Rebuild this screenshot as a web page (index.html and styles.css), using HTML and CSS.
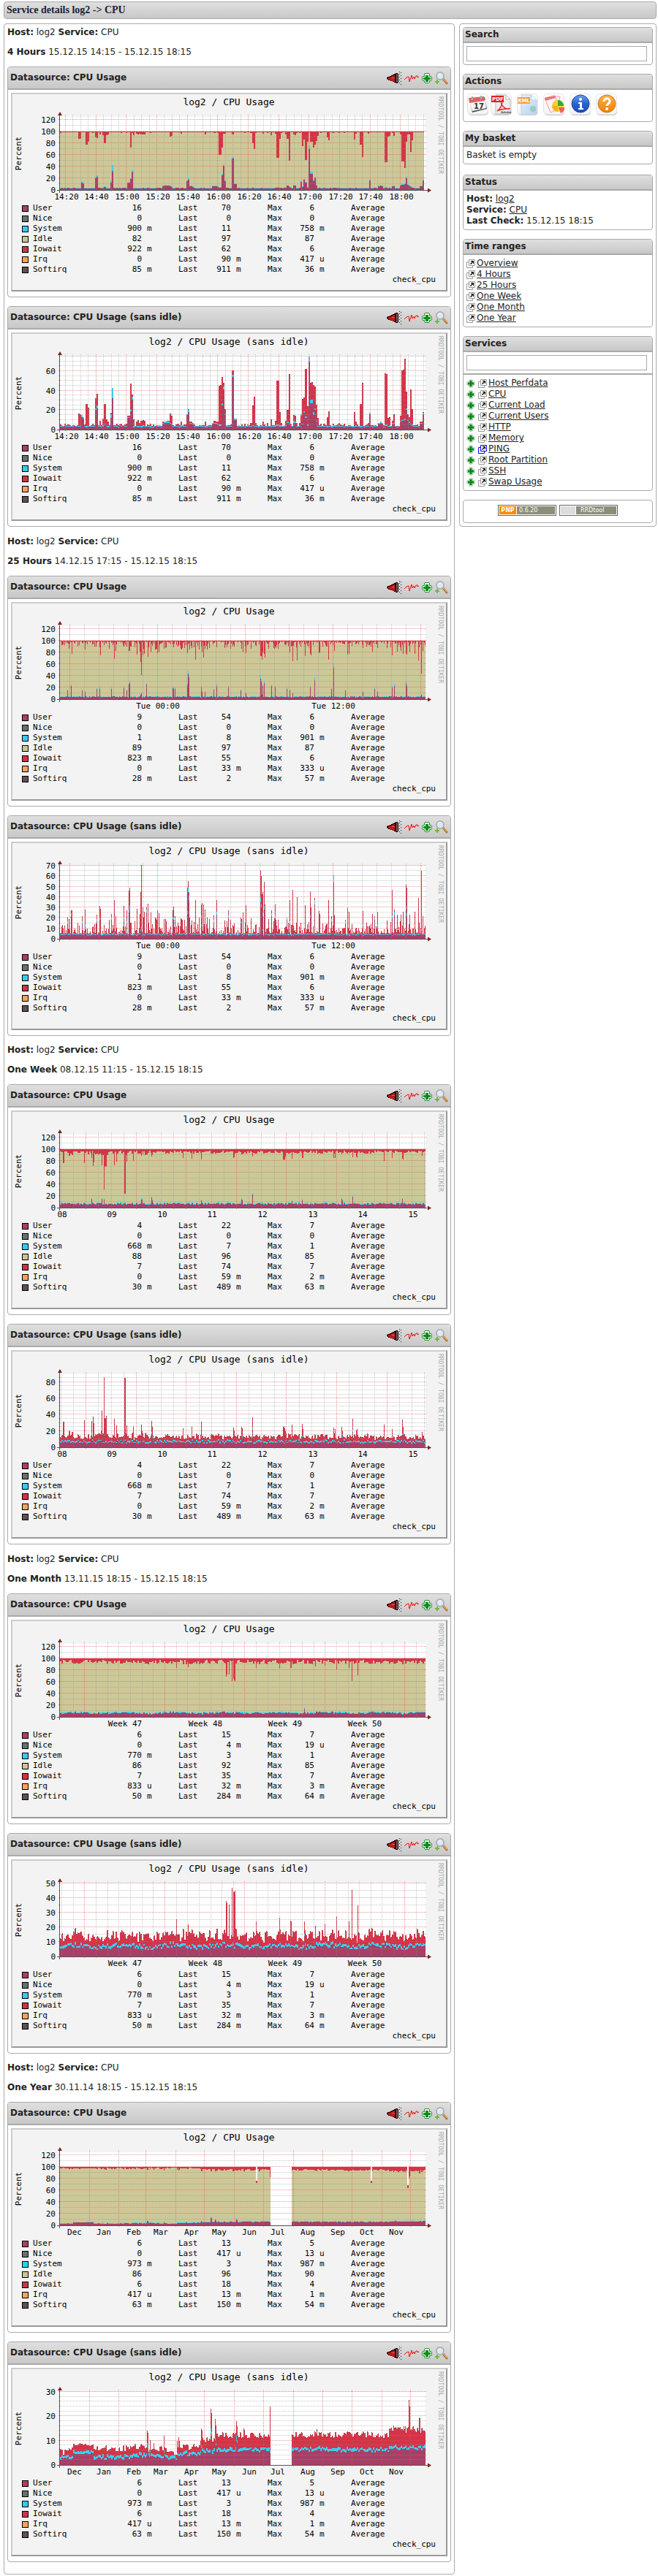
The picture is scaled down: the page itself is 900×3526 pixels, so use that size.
FILE: index.html
```html
<!DOCTYPE html>
<html lang="en">
<head>
<meta charset="utf-8">
<title>Service details log2 -&gt; CPU</title>
<link rel="stylesheet" href="styles.css">
</head>
<body>
<svg class="sprite" aria-hidden="true">
  <defs>
    <linearGradient id="g-tile" x1="0" y1="0" x2="0" y2="1"><stop offset="0" stop-color="#fff"/><stop offset="1" stop-color="#f4f4f4"/></linearGradient>
    <linearGradient id="g-blue" x1="0" y1="0" x2="0" y2="1"><stop offset="0" stop-color="#6c9cec"/><stop offset=".5" stop-color="#2c62cc"/><stop offset="1" stop-color="#1c4cb4"/></linearGradient>
    <linearGradient id="g-orange" x1="0" y1="0" x2="0" y2="1"><stop offset="0" stop-color="#ffb347"/><stop offset="1" stop-color="#f08000"/></linearGradient>
    <linearGradient id="g-page" x1="0" y1="0" x2="1" y2="1"><stop offset="0" stop-color="#e8f2fc"/><stop offset="1" stop-color="#b4d4f2"/></linearGradient>
  </defs>
  <symbol id="i-tile" viewBox="0 0 30 31">
    <rect x="1" y="1" width="28" height="29" rx="5" fill="#ccc"/>
    <rect x=".5" y=".5" width="28" height="28" rx="5" fill="url(#g-tile)" stroke="#e4e4e4"/>
  </symbol>
  <symbol id="i-alert" viewBox="0 0 20 18">
    <path d="M0 8h1V7h3V6h2V5h2V4h2V3h2V2h3v1h1v12h-1v1h-3v-1h-2v-1H8v-1H5v-1H2v-1H1v-1H0z" fill="#200"/>
    <path d="M2 8h3V7h2V6h2V5h2v9H9v-1H6v-1H4v-1H2z" fill="#c41818"/>
    <path d="M7 8h4v1H7z" fill="#f05050"/>
    <path d="M13 3h2v12h-2z" fill="#666"/>
    <path d="M17 0h1v1h-1zM19 1h1v1h-1zM17 3h1v1h-1zM19 5h1v1h-1zM17 7h1v1h-1zM19 9h1v1h-1zM17 11h1v1h-1zM19 13h1v1h-1zM17 15h1v1h-1zM19 17h1v1h-1z" fill="#222"/>
  </symbol>
  <symbol id="i-pulse" viewBox="0 0 20 12">
    <path d="M0 8l3-3 3-1 1 7 3-9 1 5 2-3 1 3 2-4h2v2l2-1" fill="none" stroke="#f01010"/>
  </symbol>
  <symbol id="i-plus" viewBox="0 0 14 14">
    <path d="M4 0h6v1h1v3h2v1h1v5h-1v1h-2v2h-1v1H4v-1H3v-2H1v-1H0V5h1V4h2V1h1z" fill="#2c8c3c"/>
    <path d="M4 1h6v4h3v5h-3v3H4v-3H1V5h3z" fill="#f0faf0"/>
    <path d="M5 3h4v3h3v3H9v3H5V9H2V6h3z" fill="#108c18"/>
  </symbol>
  <symbol id="i-plus-soft" viewBox="0 0 12 12">
    <path d="M3 1h1V0h4v1h1v2h2v1h1v4h-1v1H9v2H8v1H4v-1H3V9H1V8H0V4h1V3h2z" fill="#bcdcc0"/>
    <path d="M4 2h4v2h2v4H8v2H4V8H2V4h2z" fill="#58b064"/>
    <path d="M5 2h2v3h3v2H7v3H5V7H2V5h3z" fill="#0c8818"/>
  </symbol>
  <symbol id="i-zoom" viewBox="0 0 18 18">
    <path d="M11 10l5 6" stroke="#b87830" stroke-width="3" stroke-linecap="round"/>
    <path d="M11 10l5 5" stroke="#f0c080" stroke-width="1"/>
    <circle cx="7" cy="6" r="5" fill="#dceaf6" stroke="#b0b0b4" stroke-width="2"/>
    <path d="M4 5a3 3 0 0 1 4-2" stroke="#fff" fill="none"/>
    <path d="M2 11h2v2h2v2H4v2H2v-2H0v-2h2z" fill="#6cbc3c"/>
  </symbol>
  <symbol id="i-link" viewBox="0 0 12 12">
    <path d="M.5 3.500h8v8h-8z" fill="#fff" stroke="currentColor"/>
    <path d="M3.500.5h8v8h-8z" fill="#fff" stroke="currentColor"/>
    <path d="M6 2h4v4H9V4L6 7 5 6l3-3H6z" fill="#000"/>
  </symbol>
</svg>

<header class="bar"><h1 class="bar-title">Service details log2 -&gt; CPU</h1></header>

<div class="page">
  <main class="col main" id="periods"></main>

  <aside class="col side">
    <section class="box">
      <h2 class="box-head"><label for="q">Search</label></h2>
      <div class="box-body"><input class="field" id="q" type="text"></div>
    </section>

    <section class="box">
      <h2 class="box-head">Actions</h2>
      <div class="box-body actions">
        <button class="act" type="button" aria-label="Calendar"><svg class="act-icon" viewBox="0 0 30 31"><use href="#i-tile"/><path d="M3 8l21-3 3 16-20 5z" fill="#505050"/><path d="M3 11l22-2 1 11-19 4z" fill="#f4f4f4"/><path d="M2 6l21-2 1 6-21 3z" fill="#e06464"/><path d="M7 4v5M19 3v5" stroke="#aaa" stroke-width="2"/><text class="t-cal" x="9" y="21">17</text></svg></button>
        <a class="act" href="#pdf" aria-label="PDF"><svg class="act-icon" viewBox="0 0 30 31"><use href="#i-tile"/><path d="M7 2h14l6 6v20H7z" fill="#ececec" stroke="#bbb"/><path d="M21 2v6h6z" fill="#fff" stroke="#bbb"/><path d="M1 3h17v9H1z" fill="#e02020"/><path d="M9 24c5-3 8-12 6-11s4 9 10 8-12 0-16 3z" fill="none" stroke="#e02828" stroke-width="1.500"/><text class="t-pdf" x="2" y="10">PDF</text><text class="t-adobe" x="14" y="27">Adobe</text></svg></a>
        <a class="act" href="#xml" aria-label="XML"><svg class="act-icon" viewBox="0 0 30 31"><use href="#i-tile"/><path d="M6 2h14l7 7v19H6z" fill="url(#g-page)" stroke="#b8d0e8"/><path d="M20 2v7h7z" fill="#fff" stroke="#b8d0e8"/><path d="M1 5h17v9H1z" fill="#f8a040"/><circle cx="22" cy="21" r="4" fill="#94c8d8"/><path d="M20 19l3-1 1 3-2 3z" fill="#a4d49c"/><text class="t-pdf" x="1" y="12">XML</text></svg></a>
        <a class="act" href="#basket" aria-label="Basket"><svg class="act-icon" viewBox="0 0 30 31"><use href="#i-tile"/><path d="M11 3l12 1-2 17-12-2z" fill="#fce8e8" stroke="#f0a8a8"/><path d="M2 6l14-3 6 18-12 5z" fill="#fdf2f2" stroke="#eea0a0"/><path d="M2 6l14-3 1 3-14 4z" fill="#e87878"/><circle cx="20" cy="17" r="8" fill="#f8d030"/><path d="M20 17V9a8 8 0 0 1 8 8z" fill="#38a838"/><path d="M20 17h-8a8 8 0 0 0 8 8z" fill="#f4b020"/><path d="M21 19h8a8 8 0 0 1-5 8z" fill="#f06050"/></svg></a>
        <a class="act" href="#info" aria-label="Information"><svg class="act-icon" viewBox="0 0 30 31"><use href="#i-tile"/><circle cx="15" cy="14" r="12" fill="url(#g-blue)" stroke="#1848a8"/><circle cx="15" cy="8" r="2" fill="#fff"/><path d="M12 12h5v8h2v2h-7v-2h2v-6h-2z" fill="#fff"/></svg></a>
        <a class="act" href="#help" aria-label="Help"><svg class="act-icon" viewBox="0 0 30 31"><use href="#i-tile"/><circle cx="15" cy="14" r="12" fill="url(#g-orange)" stroke="#c87820"/><path d="M11 11c0-6 9-5 8 0 0 3-4 3-4 6" fill="none" stroke="#fff" stroke-width="3"/><circle cx="15" cy="21" r="2" fill="#fff"/></svg></a>
      </div>
    </section>

    <section class="box">
      <h2 class="box-head">My basket</h2>
      <div class="box-body">Basket is empty</div>
    </section>

    <section class="box box-status">
      <h2 class="box-head">Status</h2>
      <div class="box-body">
        <div><b>Host:</b> <a class="link" href="#log2">log2</a></div>
        <div><b>Service:</b> <a class="link" href="#cpu">CPU</a></div>
        <div><b>Last Check:</b> 15.12.15 18:15</div>
      </div>
    </section>

    <section class="box">
      <h2 class="box-head">Time ranges</h2>
      <ul class="box-body list" id="ranges"></ul>
    </section>

    <section class="box">
      <h2 class="box-head"><label for="svc">Services</label></h2>
      <div class="box-body box-filter"><input class="field" id="svc" type="text"></div>
      <ul class="box-body list" id="services"></ul>
    </section>

    <footer class="box badges">
      <a class="badge" href="#pnp"><span class="badge-tag">PNP</span><span class="badge-text">0.6.20</span></a>
      <a class="badge" href="#rrdtool"><span class="badge-tag badge-plain"></span><span class="badge-text badge-mid">RRDtool</span></a>
    </footer>
  </aside>
</div>
<script src="app.js"></script>
</body>
</html>
```
FILE: styles.css
```css
* { box-sizing: border-box; }

body {
  margin: 0;
  padding: 2px 2px 2px 5px;
  background: #fff;
  color: #222;
  font: 12px/15px "DejaVu Sans", Verdana, sans-serif;
}

.sprite { position: absolute; width: 0; height: 0; }

.bar,
.col,
.box,
.panel {
  border: 1px solid #aaa;
  border-radius: 4px;
}

.bar,
.box-head,
.panel-head {
  background: linear-gradient(#dfdfdf, #c8c8c8);
}

.bar { padding: 4px 3px; margin-bottom: 6px; }

.bar-title {
  margin: 0;
  color: #222038;
  font: bold 14px/14px "Liberation Serif", serif;
}

.page {
  display: grid;
  grid-template-columns: minmax(0, 1fr) 270px;
  gap: 6px;
  align-items: start;
}

.col { padding: 4px; }
.main { padding-bottom: 16px; }

/* periods */
.period + .period { padding-top: 12px; }
.period:nth-child(even) { padding-top: 13px; }

.period-line { margin: 0 0 12px; }
.panel + .panel { margin-top: 12px; }

.panel-head {
  display: flex;
  align-items: center;
  justify-content: space-between;
  height: 31px;
  margin: 0;
  padding: 0 3px;
  border-bottom: 2px solid #aaa;
  border-radius: 3px 3px 0 0;
}

.panel-title { margin: 0; font-size: 12px; line-height: 15px; }

.tools { display: flex; align-items: center; gap: 4px; }
.tool { display: block; }
.tool svg { display: block; }

.panel-body { padding: 4px 4px 7px; }

.graph {
  margin: 0;
  padding-bottom: 7px;
  border: 2px solid;
  border-color: #ccc #999 #999 #ccc;
  background: #f3f3f3;
  color: #000;
  font: 11px/14px "DejaVu Sans Mono", monospace;
}

.plot { display: block; width: 100%; height: auto; }
.plot text { font: 11px "DejaVu Sans Mono", monospace; }
.plot .t-title { font-size: 13px; text-anchor: middle; }
.plot .t-x { text-anchor: middle; }
.plot .t-y { text-anchor: end; }
.plot .t-mark { font-size: 8px; fill: #aaa; }

.canvas { fill: #fff; }
.axis { stroke: #555; }
.arrow { fill: #802020; }
.minor { stroke: #8f8f8f; stroke-opacity: .5; stroke-dasharray: 1 1; }
.major { stroke: #de5050; stroke-opacity: .6; stroke-dasharray: 1 1; }

.s-user { fill: #a83f66; background: #a83f66; }
.s-nice { fill: #697a70; background: #66736c; }
.s-system { fill: #33d2fa; background: #33ccf5; }
.s-idle { fill: #ccc898; background: #c9c594; }
.s-iowait { fill: #d43448; background: #d03347; }
.s-irq { fill: #f5a55a; background: #f5a35c; }
.s-softirq { fill: #5d4a4e; background: #5f5052; }

.legend {
  width: 100%;
  table-layout: fixed;
  border-collapse: collapse;
}

.legend td,
.legend th {
  height: 14px;
  padding: 0;
  font-weight: normal;
  text-align: left;
  white-space: nowrap;
}

.legend .num { text-align: right; }
.legend .unit { padding-left: 7px; }
.legend .key { padding-left: 13px; }

.swatch {
  display: block;
  width: 9px;
  height: 9px;
  border: 1px solid #000;
}

.w-key { width: 28px; }
.w-name { width: 100px; }
.w-first { width: 49px; }
.w-unit { width: 50px; }
.w-num { width: 22px; }
.w-max { width: 42px; }

.source { display: block; padding-right: 14px; text-align: right; }

/* sidebar */
.box + .box { margin-top: 12px; }
.box + .box-status { margin-top: 14px; }

.box-head {
  margin: 0;
  padding: 2px 2px;
  border-bottom: 2px solid #aaa;
  border-radius: 3px 3px 0 0;
  font-size: 12px;
  line-height: 15px;
}

.box-body { padding: 4px; }
.box-filter { border-bottom: 2px solid #aaa; }

.field {
  display: block;
  width: calc(100% - 3px);
  height: 21px;
  padding: 0 3px;
  border: 1px solid #aaa;
  background: #fff;
  font: inherit;
}

.actions { display: flex; gap: 6px; padding: 5px 5px 7px; }

.act {
  display: block;
  width: 30px;
  padding: 0;
  border: 0;
  background: none;
}

.act:first-child { margin-right: -4px; }
.act-icon { display: block; width: 30px; height: 31px; }
.act text { fill: #fff; font: bold 7px "DejaVu Sans", sans-serif; }
.act .t-cal { fill: #333; font-size: 10px; }
.act .t-adobe { fill: #555; font-size: 4px; }

.link { color: #222; text-decoration: underline; }

.list { margin: 0; list-style: none; }
.list li { display: flex; align-items: center; gap: 4px; height: 15px; }
.list a { display: flex; align-items: center; gap: 2px; color: #222; }
.list svg { display: block; width: 12px; height: 12px; color: #999; }
.list .active svg { color: #00f; }

.badges {
  display: flex;
  justify-content: center;
  gap: 4px;
  padding: 6px 4px 9px;
}

.badge {
  display: flex;
  gap: 1px;
  width: 80px;
  height: 15px;
  padding: 1px;
  border: 1px solid #666;
  background: #fff;
  color: #fff;
  font: 8px/11px "DejaVu Sans", sans-serif;
  text-decoration: none;
}

.badge-tag { width: 23px; background: #f80; font-weight: bold; text-align: center; }
.badge-plain { width: 20px; background: #ddd; }
.badge-text { flex: 1; padding-left: 3px; background: #8a8f78; }
.badge-mid { padding-left: 6px; }
```
FILE: app.js
```js
// Plot geometry, in the plot's own units.
const LEFT = 65, BASE = 131, TOP = 31, WIDTH = 500;

function random(seed) {
  let s = seed;
  return () => {
    s = (s * 1664525 + 1013904223) % 4294967296;
    return s / 4294967296;
  };
}

const range = (from, step, to) => {
  const out = [];
  for (let v = from; v <= to; v += step) out.push(v);
  return out;
};

// Samples are {user, system, total}; peaks are [index, total, user, system].
function series(count, seed, base, peaks, hold = 1) {
  const rnd = random(seed);
  const out = [];
  for (let i = 0; i < count; i++) {
    out.push(hold > 1 && i % hold && out[i - 1] ? { ...out[i - 1] } : base(i, rnd));
  }
  for (const [i, total, user, system] of peaks) {
    if (!out[i]) continue;
    const u = user || Math.min(out[i].user, total);
    out[i] = { user: u, system: system || Math.min(Math.max(1, u * 0.12), Math.max(total - u, 0)), total };
  }
  return out;
}

const hours4 = series(239, 7, (i, r) => {
  const user = 2.4 + r();
  return { user, system: 0.8, total: user + 1 + r() * r() * 3 };
}, [
  [12, 16], [13, 16], [14, 15, 13, 2], [15, 13, 11, 2], [17, 26], [18, 22], [23, 32, 20, 2], [24, 36, 22, 3],
  [26, 9], [28, 11], [29, 26, 5], [30, 10], [31, 8], [33, 17, 12, 4], [34, 43, 32, 11],
  [44, 14, 12, 1], [45, 14, 12, 1], [46, 47, 19, 1], [47, 36, 31, 3], [48, 10], [50, 8], [51, 9], [52, 7], [53, 9], [54, 9], [55, 9],
  [67, 8, 6, 1], [68, 8, 7, 1], [69, 8, 7, 1], [70, 9, 7, 1], [71, 9, 7, 1], [72, 16, 6], [73, 14, 5], [79, 8],
  [83, 16, 15, 1], [84, 21, 18, 2], [85, 8, 6, 1], [86, 8, 6, 1], [87, 7, 5, 1], [95, 8],
  [100, 7, 6, 1], [101, 9, 6, 1], [102, 8, 6, 1], [103, 8, 5, 1], [104, 45, 4], [105, 45, 4], [106, 54, 25, 2], [107, 48, 41, 3], [108, 20, 15, 1],
  [113, 61, 54, 2], [114, 11, 10], [115, 11, 10], [125, 7], [126, 24], [127, 34], [128, 7], [133, 8], [136, 7], [138, 10],
  [141, 8], [142, 50, 4], [143, 50, 4], [144, 17], [145, 7], [148, 9], [149, 20, 7], [150, 56, 5], [153, 14, 7, 2], [154, 14, 7], [155, 7],
  [158, 16, 14], [159, 31, 5], [160, 33, 17, 2], [161, 62, 12], [162, 23, 4], [163, 75, 70, 5], [164, 48, 27, 4], [165, 48, 27, 4],
  [166, 46, 15, 3], [167, 44, 20, 2], [168, 25, 8], [169, 12], [175, 13], [176, 19], [183, 7], [193, 18], [194, 8], [197, 26], [198, 47],
  [202, 7], [203, 17, 16], [209, 7, 6, 1], [210, 8, 7, 1], [211, 7, 6, 1], [213, 57, 4], [214, 57, 4], [215, 12], [216, 12], [218, 9, 6], [219, 15, 6],
  [223, 14, 8, 1], [224, 61, 9, 1], [225, 61, 9, 1], [226, 73, 10, 1], [227, 39, 20, 2], [228, 15, 9, 1], [229, 13, 7], [230, 41, 5], [231, 20, 4],
  [236, 8, 6, 1], [237, 8, 6, 1], [238, 18, 16, 1]
]);

const hours25 = series(500, 21, (i, r) => {
  const user = 3 + r() * 1.6;
  const burst = r();
  return { user, system: 0.8, total: user + 1.2 + burst * burst * burst * (i > 80 && i < 300 ? 15 : 11) };
}, [
  [2, 12], [10, 21, 15], [12, 18], [15, 27, 22], [16, 27], [30, 21, 15], [34, 28, 12], [50, 23, 17], [54, 31, 18], [55, 29],
  [67, 18], [70, 24, 18], [74, 37, 5], [76, 22], [87, 31, 19], [91, 27, 15], [94, 46, 25], [95, 49, 28], [102, 16], [105, 28], [109, 24], [110, 45, 8],
  [111, 70, 10], [113, 30], [115, 26], [118, 31, 25], [120, 33], [124, 25], [130, 20], [133, 27], [135, 24], [144, 18],
  [154, 27, 19], [155, 31, 18], [157, 22, 18], [170, 18], [174, 48, 24], [175, 55, 44], [176, 45, 37], [185, 37], [190, 20],
  [193, 33, 20], [194, 34, 12], [196, 33], [198, 27, 12], [204, 18], [210, 22, 16], [214, 37, 23], [230, 27, 20], [233, 18],
  [247, 20, 15], [250, 25], [254, 32, 10], [261, 19], [274, 66, 35, 5], [275, 60, 30], [276, 42, 8], [277, 45, 22], [279, 54, 28], [280, 33],
  [289, 27, 22], [294, 32, 20], [310, 20, 18], [314, 37, 15], [318, 46, 10], [324, 39], [335, 32], [342, 45, 20], [343, 30],
  [348, 39, 33], [354, 26], [355, 24], [367, 37], [371, 22, 17], [374, 61, 54], [375, 22], [390, 18, 15], [393, 29], [395, 26],
  [414, 26, 12], [427, 24], [430, 22, 18], [434, 26, 12], [447, 17], [454, 47, 20], [457, 28, 23], [461, 23], [466, 23], [469, 26],
  [473, 52, 28], [474, 48, 22], [478, 23], [485, 26], [490, 39], [494, 65, 8], [496, 22]
]);

const week = series(500, 5, (i, r) => {
  const user = 4.5 + r() * 3.5;
  return { user, system: 1 + r(), total: user + 4 + r() * (i < 120 ? 8 : 5) };
}, [
  [4, 31], [5, 31], [33, 32], [43, 32, 15], [45, 37], [46, 30], [57, 44, 15], [60, 85, 14], [61, 36], [62, 36], [63, 38], [74, 35], [77, 27],
  [88, 85, 8], [89, 85, 8], [91, 27], [100, 26], [111, 27, 14], [112, 20, 14], [125, 32, 17], [126, 24, 12], [168, 22], [180, 25], [193, 31, 12],
  [237, 23], [238, 21], [248, 25, 14], [249, 22, 12], [263, 37, 22], [305, 25], [306, 25], [307, 23], [308, 20], [317, 28, 11], [331, 29, 13], [332, 22],
  [374, 24], [376, 22], [385, 25, 15], [386, 20, 12], [400, 35, 19], [405, 20], [406, 22], [443, 28], [454, 22], [468, 33, 15], [469, 25], [495, 18]
], 2);

const month = series(500, 11, (i, r) => {
  const user = 5 + Math.sin(i / 11) * 0.8 + r() * 3;
  return { user, system: 1 + r(), total: user + 4 + r() * 7 };
}, [
  [159, 25], [175, 22], [227, 38], [228, 36], [231, 35], [235, 47], [237, 44], [238, 44], [239, 45], [268, 24], [300, 26],
  [315, 24], [316, 24], [334, 24, 14], [349, 21], [362, 22], [378, 27], [395, 24], [399, 45], [407, 35], [488, 19]
], 2);

// [first index, total, user]
const yearLevels = [[0, 5, 2.3], [9, 6, 2.5], [17, 8.5, 4.8], [46, 6.3, 2.4], [96, 7, 3.3], [116, 6, 3], [145, 4.6, 2.2],
  [159, 7, 3.8], [192, 10, 4.8], [210, 11.5, 5.6], [317, 12, 5.6], [450, 14, 6.4]];
const year = series(500, 3, (i, r) => {
  if (i >= 288 && i < 317) return null;
  const [, total, user] = yearLevels.filter(l => l[0] <= i).pop();
  const wobble = i > 17 && i < 46 ? 0.6 : 1.3;
  return { user: user - 0.4 + r() * wobble, system: 0.7 + r() * 0.7, total: total - 0.8 + r() * wobble * 1.9 };
}, [
  [119, 14, 8], [120, 13, 7], [123, 10, 5], [128, 9], [142, 12, 5], [160, 10], [162, 11], [163, 10], [193, 15, 7], [194, 14],
  [206, 23, 13, 2], [207, 21, 12], [212, 19, 10], [213, 16, 8], [241, 18, 10, 2], [242, 16, 9], [251, 15], [252, 14],
  [287, 24, 5], [351, 14.5], [456, 16], [470, 16], [472, 16], [477, 26.5], [478, 24], [491, 19.5], [492, 19]
], 2);

const rows = (user, nice, system, idle, iowait, irq, softirq) =>
  ({ User: user, Nice: nice, System: system, Idle: idle, Iowait: iowait, Irq: irq, Softirq: softirq });

const minorsOf = (from, step) => range(from, step, WIDTH);

const periods = [
  {
    name: '4 Hours', span: '15.12.15 14:15 - 15.12.15 18:15', data: hours4, step: 25 / 12,
    major: range(7.5, 41.67, 500), minor: minorsOf(7.5, 10.42),
    labels: ['14:20', '14:40', '15:00', '15:20', '15:40', '16:00', '16:20', '16:40', '17:00', '17:20', '17:40', '18:00'].map((t, i) => [8.5 + i * 41.67, t]),
    sans: { scale: 4 / 3, major: 20, minor: 5, max: 75 },
    legend: rows('16|70|6', '0|0|0', '900 m|11|758 m', '82|97|87', '922 m|62|6', '0|90 m|417 u', '85 m|911 m|36 m')
  },
  {
    name: '25 Hours', span: '14.12.15 17:15 - 15.12.15 18:15', data: hours25, step: 1,
    major: range(13.5, 120, 500), minor: minorsOf(13.5, 20),
    labels: [[134, 'Tue 00:00'], [374, 'Tue 12:00']],
    sans: { scale: 10 / 7, major: 10, minor: 5, max: 70 },
    legend: rows('9|54|6', '0|0|0', '1|8|901 m', '89|97|87', '823 m|55|6', '0|33 m|333 u', '28 m|2|57 m')
  },
  {
    name: 'One Week', span: '08.12.15 11:15 - 15.12.15 18:15', data: week, step: 1,
    major: range(35.5, 68.6, 500), minor: minorsOf(1.5, 17.15),
    labels: ['08', '09', '10', '11', '12', '13', '14', '15'].map((t, i) => [2.5 + i * 68.6, t]),
    sans: { scale: 1.115, major: 20, minor: 5, max: 89 },
    legend: rows('4|22|7', '0|0|0', '668 m|7|1', '88|96|85', '7|74|7', '0|59 m|2 m', '30 m|489 m|63 m')
  },
  {
    name: 'One Month', span: '13.11.15 18:15 - 15.12.15 18:15', data: month, step: 1,
    major: range(33.5, 109.6, 500), minor: minorsOf(2.5, 15.66),
    labels: [[89, 'Week 47'], [199, 'Week 48'], [308, 'Week 49'], [417, 'Week 50']],
    sans: { scale: 2, major: 10, minor: 5, max: 50 },
    legend: rows('6|15|7', '0|4 m|19 u', '770 m|3|1', '86|92|85', '7|35|7', '833 u|32 m|3 m', '50 m|284 m|64 m')
  },
  {
    name: 'One Year', span: '30.11.14 18:15 - 15.12.15 18:15', data: year, step: 1,
    major: [40.5, 80.5, 117.5, 158.5, 197.5, 238.5, 278.5, 319.5, 359.5, 399.5, 440.5, 479.5], minor: [],
    labels: [[20, 'Dec'], [60, 'Jan'], [101, 'Feb'], [138, 'Mar'], [180, 'Apr'], [218, 'May'], [259, 'Jun'], [298, 'Jul'], [339, 'Aug'], [380, 'Sep'], [420, 'Oct'], [460, 'Nov']],
    sans: { scale: 10 / 3, major: 10, minor: 2, max: 30 },
    notches: [[268, 76, 72], [425, 76, 72], [475, 69, 64]],
    legend: rows('6|13|5', '0|417 u|13 u', '973 m|3|987 m', '86|96|90', '6|18|4', '417 u|13 m|1 m', '63 m|150 m|54 m')
  }
];

const full = { scale: 0.8, major: 20, minor: 10, max: 120, idle: true };

function plot(period, axis, title) {
  const { data, step } = period;
  const y = v => BASE - v * axis.scale;
  const paths = { idle: '', iowait: '', system: '', user: '', softirq: '' };
  const bar = (kind, i, from, to, cols = 1) => {
    if (to <= from) return;
    const x0 = Math.round(LEFT + i * step), x1 = Math.round(LEFT + (i + cols) * step);
    const y0 = Math.round(y(from)), y1 = Math.round(y(to));
    if (y0 > y1) paths[kind] += `M${x0} ${y0}H${x1}V${y1}H${x0}z`;
  };
  data.forEach((d, i) => {
    if (!d) return;
    const used = d.user + d.system;
    bar('user', i, 0, d.user);
    bar('system', i, d.user, used);
    if (axis.idle) {
      const wait = Math.max(d.total - used, 1);
      bar('idle', i, used, 100 - wait);
      bar('iowait', i, 100 - wait, 100);
    } else {
      bar('iowait', i, used, d.total);
      if (i % 3 === 0 && d.total > used + 3) bar('softirq', i, d.total, d.total + 1 / axis.scale);
    }
  });

  let svg = `<svg class="plot" viewBox="0 0 593 149" role="img" aria-label="${title}">`;
  svg += `<text class="t-title" x="296" y="15">${title}</text>`;
  svg += `<text class="t-mark" transform="translate(583 3) rotate(90)">RRDTOOL / TOBI OETIKER</text>`;
  svg += `<text class="t-x" transform="translate(12 81) rotate(-90)">Percent</text>`;
  svg += `<rect class="canvas" x="${LEFT}" y="${TOP}" width="${WIDTH}" height="${BASE - TOP}"/>`;
  svg += '<g shape-rendering="crispEdges">';
  for (const kind in paths) if (paths[kind]) svg += `<path class="s-${kind}" d="${paths[kind]}"/>`;
  if (axis.idle) {
    for (const [i, top, low] of period.notches || []) {
      svg += `<rect class="canvas" x="${LEFT + i}" y="${y(100)}" width="2" height="${y(top) - y(100)}"/>`;
      svg += `<rect class="s-iowait" x="${LEFT + i}" y="${y(top)}" width="2" height="${y(low) - y(top)}"/>`;
    }
  }
  svg += '</g>';

  const vertical = xs => xs.map(x => `M${Math.floor(LEFT + x) + 0.5} ${TOP - 3}V${BASE + 3}`).join('');
  const horizontal = vs => vs.map(v => `M${LEFT - 2} ${Math.round(y(v)) - 0.5}H${LEFT + WIDTH + 2}`).join('');
  const isMajor = x => period.major.some(m => Math.abs(m - x) < 2);
  svg += `<path class="minor" d="${vertical(period.minor.filter(x => !isMajor(x)))}${horizontal(range(0, axis.minor, axis.max).filter(v => v % axis.major))}"/>`;
  svg += `<path class="major" d="${vertical(period.major)}${horizontal(range(axis.major, axis.major, axis.max))}"/>`;
  svg += `<path class="axis" d="M${LEFT - 0.5} 28V${BASE + 4}M${LEFT - 4} ${BASE + 0.5}H${LEFT + WIDTH + 4}" shape-rendering="crispEdges"/>`;
  svg += `<path class="arrow" d="M${LEFT} 24l3 5h-6zM${LEFT + WIDTH + 8} ${BASE + 0.5}l-5-3v6z"/>`;

  for (const v of range(0, axis.major, axis.max)) svg += `<text class="t-y" x="59" y="${Math.round(y(v)) + 4}">${v}</text>`;
  for (const [x, t] of period.labels) svg += `<text class="t-x" x="${Math.round(LEFT + x)}" y="144">${t}</text>`;
  return svg + '</svg>';
}

function legend(values, idle) {
  const cell = v => {
    const [n, unit = ''] = v.split(' ');
    return `<td class="num">${n}</td><td class="unit">${unit}</td>`;
  };
  const body = Object.entries(values).filter(([name]) => idle || name !== 'Idle').map(([name, v]) => {
    const [last, max, avg] = v.split('|');
    return `<tr><td class="key"><span class="swatch s-${name.toLowerCase()}"></span></td><th scope="row">${name}</th>` +
      `${cell(last)}<td>Last</td>${cell(max)}<td>Max</td>${cell(avg)}<td>Average</td></tr>`;
  }).join('');
  const cols = ['key', 'name', 'first', 'unit', 'unit', 'num', 'unit', 'max', 'num', 'unit'];
  return `<table class="legend"><colgroup>${cols.map(c => `<col class="w-${c}">`).join('')}<col></colgroup><tbody>${body}</tbody></table>`;
}

const icon = (id, w, h) => `<svg width="${w}" height="${h}" aria-hidden="true"><use href="#${id}"/></svg>`;
const tool = (id, w, h, label) => `<a class="tool" href="#${id}" aria-label="${label}">${icon(id, w, h)}</a>`;

function panel(period, axis, suffix) {
  return `<section class="panel">
    <header class="panel-head"><h2 class="panel-title">Datasource: CPU Usage${suffix}</h2>
      <div class="tools">${tool('i-alert', 20, 18, 'Alerts')}${tool('i-pulse', 20, 12, 'Trend')}${tool('i-plus', 14, 14, 'Add to basket')}${tool('i-zoom', 18, 18, 'Zoom')}</div></header>
    <div class="panel-body"><figure class="graph">${plot(period, axis, 'log2 / CPU Usage' + suffix)}${legend(period.legend, axis.idle)}
      <figcaption class="source">check_cpu</figcaption></figure></div>
  </section>`;
}

document.getElementById('periods').innerHTML = periods.map(p => `<section class="period">
  <p class="period-line"><b>Host:</b> log2 <b>Service:</b> CPU</p>
  <p class="period-line"><b>${p.name}</b> ${p.span}</p>
  ${panel(p, full, '')}${panel(p, p.sans, ' (sans idle)')}
</section>`).join('');

const link = name => `<a href="#${encodeURIComponent(name)}"${name === 'PING' ? ' class="active"' : ''}>${icon('i-link', 12, 12)}${name}</a>`;
document.getElementById('ranges').innerHTML =
  ['Overview', '4 Hours', '25 Hours', 'One Week', 'One Month', 'One Year'].map(n => `<li>${link(n)}</li>`).join('');
document.getElementById('services').innerHTML =
  ['Host Perfdata', 'CPU', 'Current Load', 'Current Users', 'HTTP', 'Memory', 'PING', 'Root Partition', 'SSH', 'Swap Usage']
    .map(n => `<li>${icon('i-plus-soft', 12, 12)}${link(n)}</li>`).join('');
```
